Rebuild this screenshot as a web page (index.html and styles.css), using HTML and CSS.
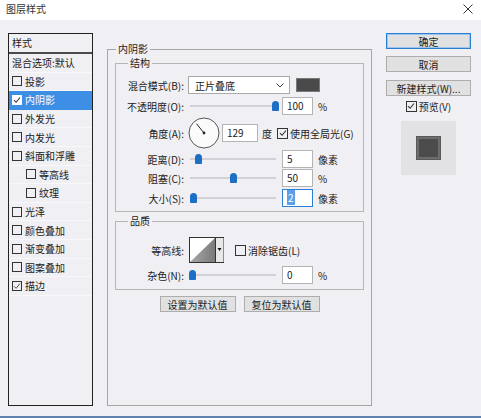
FILE: index.html
```html
<!DOCTYPE html>
<html lang="zh-CN">
<head>
<meta charset="utf-8">
<title>图层样式</title>
<link rel="stylesheet" href="styles.css">
</head>
<body>
<div class="window">
  <div class="titlebar">
    <span class="title">图层样式</span>
    <svg class="close" width="10" height="10" viewBox="0 0 10 10"><path d="M0.5 0.5L9.5 9.5M9.5 0.5L0.5 9.5" stroke="#333" stroke-width="1"/></svg>
  </div>
  <div class="content">
    <div class="stylelist">
      <div class="list-head">样式</div>
      <div class="item">混合选项:默认</div>
      <div class="item"><span class="cb"></span>投影</div>
      <div class="item selected"><span class="cb on"><svg width="8" height="8" viewBox="0 0 8 8"><path d="M1 4.2L3.1 6.3L7 1.5" fill="none" stroke="#333" stroke-width="1.1"/></svg></span>内阴影</div>
      <div class="item"><span class="cb"></span>外发光</div>
      <div class="item"><span class="cb"></span>内发光</div>
      <div class="item"><span class="cb"></span>斜面和浮雕</div>
      <div class="item sub"><span class="cb"></span>等高线</div>
      <div class="item sub"><span class="cb"></span>纹理</div>
      <div class="item"><span class="cb"></span>光泽</div>
      <div class="item"><span class="cb"></span>颜色叠加</div>
      <div class="item"><span class="cb"></span>渐变叠加</div>
      <div class="item"><span class="cb"></span>图案叠加</div>
      <div class="item"><span class="cb"><svg width="8" height="8" viewBox="0 0 8 8"><path d="M1 4.2L3.1 6.3L7 1.5" fill="none" stroke="#555" stroke-width="1"/></svg></span>描边</div>
    </div>

    <div class="main">
      <fieldset class="outer">
        <legend>内阴影</legend>
        <fieldset class="grp struct">
          <legend>结构</legend>
          <div class="row r1">
            <span class="lbl">混合模式(B):</span>
            <div class="select"><span>正片叠底</span><svg width="8" height="5" viewBox="0 0 8 5"><path d="M0.5 0.5L4 4L7.5 0.5" fill="none" stroke="#444" stroke-width="1"/></svg></div>
            <span class="swatch"></span>
          </div>
          <div class="row r2">
            <span class="lbl">不透明度(O):</span>
            <div class="slider"><span class="track"></span><span class="thumb" style="left:84px"></span></div>
            <span class="field">100</span><span class="unit">%</span>
          </div>
          <div class="row r3">
            <span class="lbl">角度(A):</span>
            <svg class="dial" width="32" height="32" viewBox="0 0 32 32"><circle cx="16" cy="16" r="15" fill="#fbfbfc" stroke="#555" stroke-width="1"/><path d="M16 16L8.5 6.7" stroke="#222" stroke-width="1"/><circle cx="16" cy="16" r="1.4" fill="#222"/></svg>
            <span class="field wide">129</span><span class="unit deg">度</span>
            <span class="cb gl"><svg width="8" height="8" viewBox="0 0 8 8"><path d="M1 4.2L3.1 6.3L7 1.5" fill="none" stroke="#333" stroke-width="1.1"/></svg></span><span class="cbl">使用全局光(G)</span>
          </div>
          <div class="row r4">
            <span class="lbl">距离(D):</span>
            <div class="slider"><span class="track"></span><span class="thumb" style="left:7px"></span></div>
            <span class="field">5</span><span class="unit">像素</span>
          </div>
          <div class="row r5">
            <span class="lbl">阻塞(C):</span>
            <div class="slider"><span class="track"></span><span class="thumb" style="left:42px"></span></div>
            <span class="field">50</span><span class="unit">%</span>
          </div>
          <div class="row r6">
            <span class="lbl">大小(S):</span>
            <div class="slider"><span class="track"></span><span class="thumb" style="left:2px"></span></div>
            <span class="field focus"><span class="sel">2</span></span><span class="unit">像素</span>
          </div>
        </fieldset>

        <fieldset class="grp quality">
          <legend>品质</legend>
          <div class="row q1">
            <span class="lbl">等高线:</span>
            <svg class="contour" width="35" height="26" viewBox="0 0 35 26">
              <defs><linearGradient id="cg" x1="0" y1="0" x2="1" y2="0"><stop offset="0" stop-color="#a8a8a8"/><stop offset="1" stop-color="#7a7a7a"/></linearGradient></defs>
              <rect x="0.5" y="0.5" width="34" height="25" fill="#fff" stroke="#333"/>
              <polygon points="1,25 26,1 26,25" fill="url(#cg)"/>
              <rect x="26.5" y="1" width="8" height="24" fill="#e8e8e8"/>
              <path d="M26.5 0.5V25.5" stroke="#333"/>
              <polygon points="28.5,11 32.5,11 30.5,14" fill="#111"/>
            </svg>
            <span class="cb aa"></span><span class="cbl">消除锯齿(L)</span>
          </div>
          <div class="row q2">
            <span class="lbl">杂色(N):</span>
            <div class="slider"><span class="track"></span><span class="thumb" style="left:1px"></span></div>
            <span class="field">0</span><span class="unit">%</span>
          </div>
        </fieldset>

        <div class="defaults">
          <span class="btn small">设置为默认值</span>
          <span class="btn small">复位为默认值</span>
        </div>
      </fieldset>
    </div>

    <div class="side">
      <span class="btn primary">确定</span>
      <span class="btn cancel">取消</span>
      <span class="btn newstyle">新建样式(W)...</span>
      <div class="preview-row"><span class="cb"><svg width="8" height="8" viewBox="0 0 8 8"><path d="M1 4.2L3.1 6.3L7 1.5" fill="none" stroke="#333" stroke-width="1.1"/></svg></span><span class="cbl">预览(V)</span></div>
      <div class="preview"><span class="sample"></span></div>
    </div>
  </div>
</div>
</body>
</html>
```
FILE: styles.css
```css
* { box-sizing: border-box; }
html, body { margin: 0; padding: 0; }
body {
  width: 481px;
  height: 418px;
  overflow: hidden;
  font-family: "Noto Sans CJK SC", "Liberation Sans", sans-serif;
  font-size: 10px;
  color: #1b1b1b;
  background: #f0eff3;
}
.window {
  width: 481px;
  height: 418px;
  display: flex;
  flex-direction: column;
  border-bottom: 2px solid #5f83ad;
}
.titlebar {
  height: 20px;
  background: #fff;
  display: flex;
  align-items: center;
  justify-content: space-between;
  padding: 0 8px 2px 6px;
}
.title { color: #333; line-height: 14px; }
.close { display: block; }

.content {
  flex: 1;
  display: flex;
  padding: 13px 0 0 8px;
}

/* left list */
.stylelist {
  width: 85px;
  margin-bottom: 10px;
  border: 1px solid #222;
  background: #f0eff3;
}
.list-head {
  height: 20px;
  line-height: 17px;
  padding-left: 3px;
  border-bottom: 2px solid #4a4a4a;
}
.item {
  height: 18.6px;
  display: flex;
  align-items: center;
  padding-left: 3px;
  border-bottom: 1px solid #f8f8fa;
  white-space: nowrap;
}
.item.sub { padding-left: 17px; }
.item.selected { background: #3c8fe5; color: #fff; border-bottom-color: #3c8fe5; }
.cb {
  width: 10px;
  height: 10px;
  border: 1px solid #333;
  display: inline-flex;
  align-items: center;
  justify-content: center;
  flex: none;
  margin-right: 3px;
}
.cb.on { background: #fff; border-color: #fff; }
.cb svg { display: block; }

/* main */
.main {
  width: 265px;
  margin-left: 14px;
  padding: 9px 0 10px;
  display: flex;
  flex-direction: column;
}
fieldset {
  margin: 0;
  min-width: 0;
}
legend {
  line-height: 14px;
  padding: 0 2px;
}
.outer {
  flex: 1;
  border: 1px solid #a6a6a6;
  padding: 0 7px 0 7px;
}
.outer > legend { margin-left: 1px; }
.grp {
  border: 1px solid #b6b6b6;
  padding: 0;
}
.grp > legend { margin-left: 12px; }
.struct { padding: 6px 0 4px; }
.quality { margin-top: 2px; padding: 9px 0 5px; }

.row {
  display: flex;
  align-items: center;
  height: 18px;
}
.r2 { margin-top: 3px; }
.r3 { margin-top: 2px; height: 32px; }
.r4 { margin-top: 1px; }
.r5 { margin-top: 1px; }
.r6 { margin-top: 2px; }
.q1 { height: 26px; }
.q2 { margin-top: 3px; }

.lbl {
  width: 68px;
  text-align: right;
  margin-right: 4px;
  white-space: nowrap;
  flex: none;
}
.select {
  width: 102px;
  height: 18px;
  background: #fff;
  border: 1px solid #a9a9a9;
  display: flex;
  align-items: center;
  justify-content: space-between;
  padding: 0 5px 0 6px;
}
.select svg { display: block; }
.swatch {
  width: 24px;
  height: 14px;
  margin-left: 6px;
  background: #4a4a4a;
  border: 1px solid #7a7a7a;
}
.slider {
  position: relative;
  width: 90px;
  height: 18px;
  display: flex;
  align-items: center;
}
.track {
  display: block;
  width: 86px;
  margin-left: 2px;
  height: 2px;
  background: #d2d2d6;
}
.thumb {
  position: absolute;
  top: 4px;
  width: 7px;
  height: 10px;
  background: #1c6fc4;
  border-radius: 3.5px 3.5px 1px 1px;
}
.field {
  width: 31px;
  height: 18px;
  margin-left: 4px;
  background: #fff;
  border: 1px solid #b4b4b4;
  padding-left: 4px;
  line-height: 16px;
}
.field.wide { width: 36px; margin-left: 2px; }
.field.focus { border-color: #2a7fd6; }
.sel { background: #5a9fe8; color: #fff; padding: 0 1px; }
.unit { margin-left: 5px; white-space: nowrap; }
.unit.deg { margin-left: 4px; }
.dial { display: block; flex: none; }
.cb.gl { margin-left: 5px; margin-right: 2px; width: 11px; height: 11px; }
.cbl { white-space: nowrap; }
.contour { display: block; margin-left: 1px; flex: none; }
.cb.aa { margin-left: 11px; margin-right: 2px; width: 11px; height: 11px; }

.defaults {
  display: flex;
  justify-content: center;
  gap: 8px;
  margin-top: 6px;
}
.btn {
  display: flex;
  align-items: center;
  justify-content: center;
  height: 16px;
  background: #e1e1e1;
  border: 1px solid #adadad;
  white-space: nowrap;
}
.btn.small { width: 76px; }

/* side */
.side {
  width: 85px;
  margin-left: 14px;
  display: flex;
  flex-direction: column;
  align-items: center;
}
.side .btn { width: 85px; }
.btn.primary { border-color: #2b7fd3; box-shadow: inset 0 0 0 1px #9cc4ec; }
.btn.cancel { margin-top: 7px; }
.btn.newstyle { margin-top: 8px; }
.preview-row {
  margin-top: 3px;
  height: 14px;
  display: flex;
  align-items: center;
}
.preview-row .cb { width: 11px; height: 11px; margin-right: 2px; }
.preview {
  margin-top: 8px;
  width: 55px;
  height: 54px;
  background: #e2e2e4;
  display: flex;
  align-items: center;
  justify-content: center;
}
.sample {
  width: 23px;
  height: 22px;
  background: #4c4c4c;
  border: 2px solid #6c6c6c;
  box-shadow: 0 0 0 1px #5a5a5a;
}
```
